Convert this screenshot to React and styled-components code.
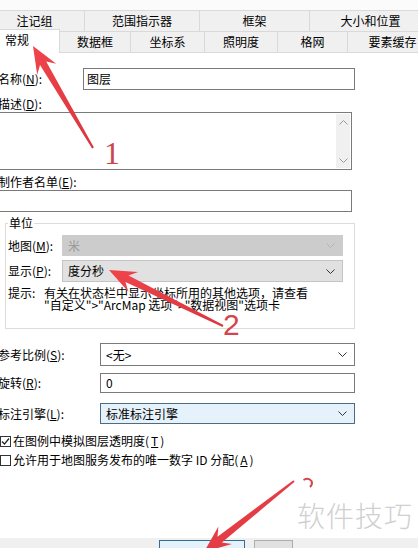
import React from "react";
import styled, { createGlobalStyle } from "styled-components";

const GlobalStyle = createGlobalStyle`
  html, body {
    margin: 0;
    padding: 0;
    background: #fff;
  }
  body {
    font-family: "Noto Sans CJK SC", "Microsoft YaHei", sans-serif;
    color: #000;
  }
`;

const Window = styled.div`
  position: relative;
  width: 418px;
  height: 548px;
  overflow: hidden;
  background: #fff;
  display: flex;
  flex-direction: column;
`;

const TabStrip = styled.div`
  flex: none;
  padding-top: 10px;
  background: #fbfbfb;
`;

const TabRow = styled.div`
  display: flex;
  height: ${(p) => p.$h}px;
  margin-left: ${(p) => p.$shift}px;
`;

const Tab = styled.div`
  flex: none;
  box-sizing: border-box;
  width: ${(p) => p.$w}px;
  border-top: 1px solid #d9d9d9;
  border-right: 1px solid #d9d9d9;
  border-bottom: ${(p) => (p.$bottom ? "1px solid #d9d9d9" : "none")};
  background: #f0f0f0;
  font-size: 12px;
  line-height: 19px;
  text-align: center;
  white-space: nowrap;
`;

const ActiveTab = styled(Tab)`
  height: 24px;
  margin-top: -2px;
  border-bottom: none;
  background: #fff;
  text-align: right;
  padding-right: 30px;
  line-height: 19px;
`;

const Page = styled.div`
  flex: 1;
  margin-left: -2px;
  padding-top: 15px;
  font-size: 12px;
  line-height: 14px;
`;

const Row = styled.div`
  display: grid;
  grid-template-columns: ${(p) => p.$label}px ${(p) => p.$field}px;
  align-items: center;
  margin-top: ${(p) => p.$mt || 0}px;
  white-space: nowrap;
`;

const Label = styled.div`
  font-size: 12px;
`;

const BlockLabel = styled.div`
  margin-top: ${(p) => p.$mt}px;
  height: 14px;
`;

const Field = styled.div`
  box-sizing: border-box;
  height: ${(p) => p.$h}px;
  width: ${(p) => (p.$w ? `${p.$w}px` : "auto")};
  margin-top: ${(p) => p.$mt || 0}px;
  border: 1px solid #7a7a7a;
  background: #fff;
  padding-left: ${(p) => p.$pad || 4}px;
  display: flex;
  align-items: center;
`;

const TextArea = styled.div`
  box-sizing: border-box;
  width: 354px;
  height: 58px;
  margin-top: 1px;
  border: 1px solid #7a7a7a;
  display: flex;
  justify-content: flex-end;
  padding: 1px 1px 1px 0;
`;

const ScrollBar = styled.div`
  width: 14px;
  background: #f0f0f0;
  display: flex;
  flex-direction: column;
  justify-content: space-between;
  align-items: center;
  padding: 6px 0 5px;
`;

const comboLook = {
  disabled: { bg: "#cccccc", border: "#cccccc", color: "#9a9a9a", arrow: "#b4b4b4" },
  gray: { bg: "#e1e1e1", border: "#c4c4c4", color: "#000", arrow: "#333" },
  plain: { bg: "#fff", border: "#7a7a7a", color: "#000", arrow: "#333" },
  focus: { bg: "#e5f1fb", border: "#4d6c80", color: "#000", arrow: "#333" },
};

const Combo = styled.div`
  box-sizing: border-box;
  height: ${(p) => p.$h}px;
  border: 1px solid ${(p) => comboLook[p.$look].border};
  background: ${(p) => comboLook[p.$look].bg};
  color: ${(p) => comboLook[p.$look].color};
  padding: 0 7px 0 5px;
  display: flex;
  align-items: center;
  justify-content: space-between;
`;

const Group = styled.fieldset`
  box-sizing: border-box;
  width: 350px;
  min-width: 0;
  margin: 4px 0 0 7px;
  padding: 0 0 17px 2px;
  border: 1px solid #dcdcdc;
`;

const Legend = styled.legend`
  padding: 0 1px;
  line-height: 14px;
  font-size: 12px;
`;

const Hint = styled.div`
  display: grid;
  grid-template-columns: 36px auto;
  margin-top: 5px;
  font-size: 12px;
  line-height: 12px;
  white-space: nowrap;
`;

const CheckRow = styled.label`
  display: flex;
  align-items: center;
  gap: 2px;
  height: 12px;
  margin-top: ${(p) => p.$mt}px;
  margin-left: 2px;
  white-space: nowrap;
`;

const Box = styled.span`
  box-sizing: border-box;
  width: 11px;
  height: 11px;
  border: 1px solid #333;
  background: #fff;
  display: inline-flex;
  align-items: center;
  justify-content: center;
`;

const Footer = styled.div`
  flex: none;
  height: 8px;
  background: #f0f0f0;
  display: flex;
  gap: 9px;
  padding: 2px 0 0 159px;
`;

const Button = styled.div`
  box-sizing: border-box;
  width: ${(p) => p.$w}px;
  height: 22px;
  border: 1px solid ${(p) => (p.$primary ? "#2f6d91" : "#adadad")};
  background: ${(p) => (p.$primary ? "#e5f1fb" : "#e1e1e1")};
`;

const Watermark = styled.div`
  position: absolute;
  left: 297px;
  top: 498px;
  font-size: 28px;
  line-height: 34px;
  font-weight: 300;
  color: #d0d0d0;
  letter-spacing: 1px;
  pointer-events: none;
`;

const Marks = styled.svg`
  position: absolute;
  left: 0;
  top: 0;
  pointer-events: none;
`;

const Chevron = ({ color = "#333", up }) => (
  <svg width="9" height="5" viewBox="0 0 9 5">
    <polyline
      points={up ? "0.5,4.5 4.5,0.5 8.5,4.5" : "0.5,0.5 4.5,4.5 8.5,0.5"}
      fill="none"
      stroke={color}
      strokeWidth="1"
    />
  </svg>
);

const Check = () => (
  <svg width="9" height="9" viewBox="0 0 9 9">
    <polyline points="1,4.5 3.5,7 8,1.5" fill="none" stroke="#222" strokeWidth="1.2" />
  </svg>
);

// tapered callout arrow from tail to tip, with a swept-back head
const arrowPoints = (tail, tip) => {
  const [tx, ty] = tail;
  const [hx, hy] = tip;
  const len = Math.hypot(hx - tx, hy - ty);
  const ux = (hx - tx) / len;
  const uy = (hy - ty) / len;
  const nx = -uy;
  const ny = ux;
  const at = (d, w) => [hx - ux * d + nx * w, hy - uy * d + ny * w];
  const pts = [
    [tx + nx * 1, ty + ny * 1],
    at(20, 3.6),
    at(27, 11),
    [hx, hy],
    at(27, -11),
    at(20, -3.6),
    [tx - nx * 1, ty - ny * 1],
  ];
  return pts.map((p) => p.map((v) => v.toFixed(1)).join(",")).join(" ");
};

const arrows = [
  { tail: [93, 148], tip: [33, 46] },
  { tail: [223, 326], tip: [109, 270] },
  { tail: [294, 481], tip: [204, 552] },
];

const Annotations = () => (
  <Marks width="418" height="548" viewBox="0 0 418 548">
    <defs>
      <linearGradient id="redFill" x1="0" y1="0" x2="1" y2="1">
        <stop offset="0" stopColor="#f0444c" />
        <stop offset="1" stopColor="#d9353d" />
      </linearGradient>
    </defs>
    {arrows.map((a, i) => (
      <polygon key={i} points={arrowPoints(a.tail, a.tip)} fill="url(#redFill)" />
    ))}
    <text x="104" y="164" fontFamily="Liberation Serif, serif" fontSize="32" fill="#c9464f">
      1
    </text>
    <text x="223" y="335" fontFamily="Liberation Sans, sans-serif" fontSize="30" fill="#d4464f">
      2
    </text>
    <path d="M303.5 480 q5 -3 8 1 q1.5 3 -1.5 6" fill="none" stroke="#d4464f" strokeWidth="2" />
  </Marks>
);

const topTabs = [
  ["注记组", 100],
  ["范围指示器", 115],
  ["框架", 110],
  ["大小和位置", 122],
];

const bottomTabs = [
  ["数据框", 71],
  ["坐标系", 74],
  ["照明度", 73],
  ["格网", 70],
  ["要素缓存", 90],
];

export default function App() {
  return (
    <Window>
      <GlobalStyle />
      <TabStrip>
        <TabRow $h={21} $shift={-15}>
          {topTabs.map(([name, w]) => (
            <Tab key={name} $w={w}>
              {name}
            </Tab>
          ))}
        </TabRow>
        <TabRow $h={22} $shift={0}>
          <ActiveTab $w={60}>常规</ActiveTab>
          {bottomTabs.map(([name, w]) => (
            <Tab key={name} $w={w} $bottom>
              {name}
            </Tab>
          ))}
        </TabRow>
      </TabStrip>

      <Page>
        <Row $label={85} $field={272}>
          <Label>
            名称(<u>N</u>):
          </Label>
          <Field $h={22} $pad={3}>图层</Field>
        </Row>

        <BlockLabel $mt={7}>
          描述(<u>D</u>):
        </BlockLabel>
        <TextArea>
          <ScrollBar>
            <Chevron color="#9a9a9a" up />
            <Chevron color="#9a9a9a" />
          </ScrollBar>
        </TextArea>

        <BlockLabel $mt={5}>
          制作者名单(<u>E</u>):
        </BlockLabel>
        <Field $h={22} $w={354} $mt={1} />

        <Group>
          <Legend>单位</Legend>
          <Row $label={54} $field={281} $mt={5}>
            <Label>
              地图(<u>M</u>):
            </Label>
            <Combo $look="disabled" $h={21}>
              米
              <Chevron color={comboLook.disabled.arrow} />
            </Combo>
          </Row>
          <Row $label={54} $field={281} $mt={4}>
            <Label>
              显示(<u>P</u>):
            </Label>
            <Combo $look="gray" $h={22}>
              度分秒
              <Chevron />
            </Combo>
          </Row>
          <Hint>
            <span>提示:</span>
            <span>
              有关在状态栏中显示坐标所用的其他选项，请查看
              <br />
              "自定义"&gt;"ArcMap 选项"&gt;"数据视图"选项卡
            </span>
          </Hint>
        </Group>

        <Row $label={102} $field={255} $mt={14}>
          <Label>
            参考比例(<u>S</u>):
          </Label>
          <Combo $look="plain" $h={23}>
            &lt;无&gt;
            <Chevron />
          </Combo>
        </Row>
        <Row $label={102} $field={255} $mt={7}>
          <Label>
            旋转(<u>R</u>):
          </Label>
          <Field $h={20} $pad={5}>0</Field>
        </Row>
        <Row $label={102} $field={255} $mt={10}>
          <Label>
            标注引擎(<u>L</u>):
          </Label>
          <Combo $look="focus" $h={21}>
            标准标注引擎
            <Chevron />
          </Combo>
        </Row>

        <CheckRow $mt={11}>
          <Box>
            <Check />
          </Box>
          在图例中模拟图层透明度(<u>T</u>)
        </CheckRow>
        <CheckRow $mt={7}>
          <Box />
          允许用于地图服务发布的唯一数字 ID 分配(<u>A</u>)
        </CheckRow>
      </Page>

      <Footer>
        <Button $w={86} $primary />
        <Button $w={39} />
      </Footer>

      <Watermark>软件技巧</Watermark>
      <Annotations />
    </Window>
  );
}
